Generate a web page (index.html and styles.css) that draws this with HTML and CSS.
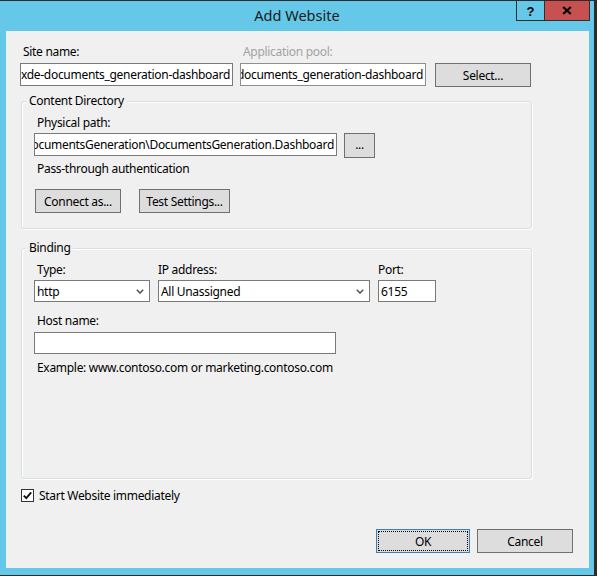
FILE: index.html
```html
<!DOCTYPE html>
<html>
<head>
<meta charset="utf-8">
<link rel="stylesheet" href="styles.css">
</head>
<body>
<div class="window">
  <div class="titlebar">
    <div class="spacer"></div>
    <div class="title">Add Website</div>
    <div class="caption">
      <div class="cbtn help">?</div>
      <div class="cbtn close">
        <svg width="10" height="9" viewBox="0 0 10 9"><path d="M1.2 1 L8.8 8 M8.8 1 L1.2 8" stroke="#000" stroke-width="2.2" fill="none"/></svg>
      </div>
    </div>
  </div>
  <div class="client">
    <div class="top">
      <div class="lbl ind">Site name:</div>
      <div class="lbl disabled">Application pool:</div>
      <div></div>
      <div class="input"><span>xde-documents_generation-dashboard</span></div>
      <div class="input ro"><span>documents_generation-dashboard</span></div>
      <div class="btn select">Select...</div>
    </div>

    <div class="group content-dir">
      <span class="legend">Content Directory</span>
      <div class="lbl ind">Physical path:</div>
      <div class="path-row">
        <div class="input path"><span>DocumentsGeneration\DocumentsGeneration.Dashboard</span></div>
        <div class="btn dots">...</div>
      </div>
      <div class="lbl ind pass">Pass-through authentication</div>
      <div class="btn-row">
        <div class="btn connect">Connect as...</div>
        <div class="btn test">Test Settings...</div>
      </div>
    </div>

    <div class="group binding">
      <span class="legend">Binding</span>
      <div class="bind-grid">
        <div class="lbl ind">Type:</div>
        <div class="lbl">IP address:</div>
        <div class="lbl">Port:</div>
        <div class="select-box"><span>http</span>
          <svg class="chev" width="8" height="5" viewBox="0 0 8 5"><polyline points="0.8,0.8 4,4 7.2,0.8" stroke="#555" stroke-width="1.6" fill="none"/></svg>
        </div>
        <div class="select-box"><span>All Unassigned</span>
          <svg class="chev" width="8" height="5" viewBox="0 0 8 5"><polyline points="0.8,0.8 4,4 7.2,0.8" stroke="#555" stroke-width="1.6" fill="none"/></svg>
        </div>
        <div class="input port"><span>6155</span></div>
      </div>
      <div class="lbl ind host-lbl">Host name:</div>
      <div class="input host"></div>
      <div class="lbl ind example">Example: www.contoso.com or marketing.contoso.com</div>
    </div>

    <div class="check-row">
      <svg class="checkbox" width="13" height="13" viewBox="0 0 13 13"><rect x="0.5" y="0.5" width="12" height="12" fill="#fff" stroke="#333"/><path d="M2.8 6.6 L5.3 9.2 L10.2 3.4" stroke="#111" stroke-width="1.9" fill="none"/></svg>
      <span class="check-lbl">Start Website immediately</span>
    </div>

    <div class="footer">
      <div class="btn ok">OK</div>
      <div class="btn cancel">Cancel</div>
    </div>
  </div>
</div>
</body>
</html>
```
FILE: styles.css
```css
* { box-sizing: border-box; }
html, body { margin: 0; padding: 0; }
body {
  font-family: "Noto Sans", "Open Sans", sans-serif;
  font-size: 12px;
  letter-spacing: -0.3px;
  color: #000;
  background: #65c8e9;
}
.window {
  width: 597px;
  height: 576px;
  background: #65c8e9;
  border-top: 1px solid #2b2b2b;
  border-right: 3px solid #2b2b2b;
  border-bottom: 1px solid #2b2b2b;
  overflow: hidden;
}
.titlebar {
  height: 30px;
  display: grid;
  grid-template-columns: 1fr auto 1fr;
  align-items: center;
}
.title {
  font-size: 14.5px;
  letter-spacing: 0;
  color: #1b1b1b;
  line-height: 20px;
  margin-top: -2px;
}
.caption {
  justify-self: end;
  align-self: start;
  display: flex;
  margin-right: 4px;
}
.cbtn {
  height: 20px;
  border: 1px solid #2f2f2f;
  border-top: none;
  display: flex;
  align-items: center;
  justify-content: center;
}
.help {
  width: 28px;
  border-right: none;
  font-family: "Liberation Sans", sans-serif;
  font-weight: bold;
  font-size: 13px;
  letter-spacing: 0;
  padding-top: 1px;
}
.close {
  width: 46px;
  background: #c75050;
}
.client {
  margin-left: 6px;
  width: 583px;
  height: 537px;
  background: #f0f0f0;
  padding: 13px 0 0 14px;
}
.lbl {
  height: 16px;
  line-height: 16px;
  white-space: nowrap;
}
.ind { padding-left: 3px; }
.disabled { color: #a3a3a3; }

.top {
  display: grid;
  grid-template-columns: 213px 186px 98px;
  column-gap: 7px;
  row-gap: 3px;
}
.top .disabled { padding-left: 3px; }

.input {
  background: #fff;
  border: 1px solid #7a7a7a;
  height: 23px;
  display: flex;
  align-items: center;
  justify-content: flex-end;
  overflow: hidden;
  padding: 0 2px 0 2px;
  white-space: nowrap;
}
.input span { flex-shrink: 0; }
.input.ro { border-color: #8e8e8e; }

.btn {
  background: #dddddd;
  border: 1px solid #707070;
  height: 24px;
  display: flex;
  align-items: center;
  justify-content: center;
  white-space: nowrap;
}
.select { margin-left: 2px; }

.group {
  position: relative;
  margin-left: 1px;
  width: 511px;
  border: 1px solid #d5dfe5;
  border-radius: 3px;
  box-shadow: inset 1px 1px 0 #fff, 1px 1px 0 #fff;
  padding: 13px 0 0 12px;
}
.legend {
  position: absolute;
  top: -9px;
  left: 4px;
  padding: 0 3px;
  line-height: 16px;
  background: #f0f0f0;
}
.content-dir {
  margin-top: 14px;
  padding-bottom: 15px;
}
.path-row {
  display: flex;
  align-items: flex-start;
  margin-top: 2px;
}
.input.path { width: 303px; }
.dots {
  width: 31px;
  height: 25px;
  margin-left: 7px;
  padding-bottom: 3px;
}
.pass { margin-top: 3px; }
.btn-row {
  display: flex;
  margin-top: 12px;
}
.connect { width: 86px; margin-left: 1px; }
.test { width: 91px; margin-left: 18px; }

.binding {
  margin-top: 19px;
  height: 231px;
}
.bind-grid {
  display: grid;
  grid-template-columns: 116px 212px 58px;
  column-gap: 8px;
  row-gap: 2px;
}
.select-box {
  background: #fff;
  border: 1px solid #7a7a7a;
  height: 22px;
  display: flex;
  align-items: center;
  justify-content: space-between;
  padding: 0 5px 0 2px;
}
.chev { display: block; margin-top: 1px; }
.input.port { height: 22px; justify-content: flex-start; }
.host-lbl { margin-top: 11px; }
.input.host { width: 302px; height: 22px; margin-top: 3px; }
.example { margin-top: 6px; }

.check-row {
  display: flex;
  align-items: center;
  height: 16px;
  margin-top: 8px;
  margin-left: 1px;
}
.checkbox { display: block; }
.check-lbl { margin-left: 5px; }

.footer {
  display: flex;
  justify-content: flex-end;
  margin-top: 26px;
  padding-right: 16px;
}
.ok {
  width: 94px;
  border-color: #3c7fb1;
  outline: 1px dotted #000;
  outline-offset: -3px;
}
.cancel {
  width: 96px;
  margin-left: 7px;
}
```
